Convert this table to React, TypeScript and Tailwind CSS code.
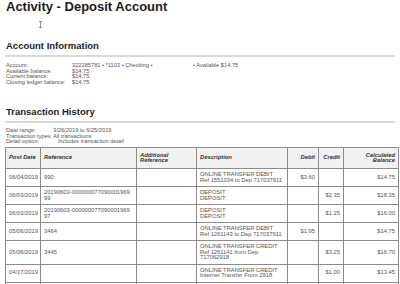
const rows = [
  {
    date: "06/04/2019",
    ref: ["990"],
    desc: ["ONLINE TRANSFER DEBIT", "Ref 1551034 to Dep 717037911"],
    debit: "$3.60",
    credit: "",
    balance: "$14.75",
  },
  {
    date: "06/03/2019",
    ref: ["20190603-000000077090001969", "99"],
    desc: ["DEPOSIT", "DEPOSIT"],
    debit: "",
    credit: "$2.35",
    balance: "$18.35",
  },
  {
    date: "06/03/2019",
    ref: ["20190603-000000077090001969", "97"],
    desc: ["DEPOSIT", "DEPOSIT"],
    debit: "",
    credit: "$1.25",
    balance: "$16.00",
  },
  {
    date: "05/06/2019",
    ref: ["3464"],
    desc: ["ONLINE TRANSFER DEBIT", "Ref 1261143 to Dep 717037911"],
    debit: "$1.95",
    credit: "",
    balance: "$14.75",
  },
  {
    date: "05/06/2019",
    ref: ["3445"],
    desc: ["ONLINE TRANSFER CREDIT", "Ref 1261141 from Dep", "717062918"],
    debit: "",
    credit: "$3.25",
    balance: "$16.70",
  },
  {
    date: "04/17/2019",
    ref: [],
    desc: ["ONLINE TRANSFER CREDIT", "Internet Transfer From 2918"],
    debit: "",
    credit: "$1.00",
    balance: "$13.45",
  },
]

function Lines({ items }: { items: string[] }) {
  return (
    <>
      {items.map((t, i) => (
        <span key={i} className="block whitespace-nowrap">
          {t}
        </span>
      ))}
    </>
  )
}

export default function App() {
  const th = "border border-[#8c8c8c] bg-[#f1f1f1] px-[3px] py-[4.5px] align-middle font-bold italic text-[#333]"
  const td = "border border-[#8c8c8c] px-[3px] py-[3px] align-middle"

  return (
    <div className="relative h-[284px] w-[400px] overflow-hidden bg-white font-['Liberation_Sans',Arial,sans-serif]">
      <h1 className="pl-[6px] text-[13px] leading-[13px] font-bold text-[#1b1b1b]">
        Activity - Deposit Account
      </h1>

      {/* mouse cursor left in the capture */}
      <svg className="absolute left-[38px] top-[21px]" width="5" height="7" viewBox="0 0 5 7">
        <path d="M1 0.5h3M2.5 0.5v6M1 6.5h3" stroke="#666" strokeWidth="0.7" fill="none" />
      </svg>

      <h2 className="mt-[27px] pl-[6px] text-[9.5px] leading-[12px] font-bold text-[#222]">
        Account Information
      </h2>
      <div className="mx-[5px] mt-[3px] h-[2px] bg-[#dadada]" />
      <div className="mt-[6px] pl-[6px] text-[5.7px] leading-[5.5px] text-[#555]">
        <div className="flex whitespace-nowrap">
          <span className="w-[66px] shrink-0">Account:</span>
          <span className="w-[121px] shrink-0">322285781 • *1102 • Checking •</span>
          <span>• Available $14.75</span>
        </div>
        <div className="flex whitespace-nowrap">
          <span className="w-[66px] shrink-0">Available balance:</span>
          <span>$14.75</span>
        </div>
        <div className="flex whitespace-nowrap">
          <span className="w-[66px] shrink-0">Current balance:</span>
          <span>$14.75</span>
        </div>
        <div className="flex whitespace-nowrap">
          <span className="w-[66px] shrink-0">Closing ledger balance:</span>
          <span>$14.75</span>
        </div>
      </div>

      <h2 className="mt-[21px] pl-[6px] text-[9.5px] leading-[12px] font-bold text-[#222]">
        Transaction History
      </h2>
      <div className="mx-[5px] mt-[3px] h-[2px] bg-[#dadada]" />
      <div className="mt-[5px] pl-[6px] text-[5.7px] leading-[5.5px] text-[#555]">
        <div className="flex whitespace-nowrap">
          <span className="w-[47px] shrink-0">Date range:</span>
          <span>3/26/2019 to 6/25/2019</span>
        </div>
        <div className="flex whitespace-nowrap">
          <span className="w-[47px] shrink-0">Transaction types:</span>
          <span>All transactions</span>
        </div>
        <div className="flex whitespace-nowrap">
          <span className="w-[52px] shrink-0">Detail option:</span>
          <span>Includes transaction detail</span>
        </div>
      </div>

      <table className="ml-[5px] mt-[2.5px] w-[393px] table-fixed border-collapse text-left text-[5.8px] leading-[5.5px] text-[#555]">
        <colgroup>
          <col className="w-[35px]" />
          <col className="w-[96px]" />
          <col className="w-[60px]" />
          <col className="w-[91px]" />
          <col className="w-[31px]" />
          <col className="w-[25px]" />
          <col className="w-[55px]" />
        </colgroup>
        <thead>
          <tr>
            <th className={th}>Post Date</th>
            <th className={th}>Reference</th>
            <th className={th}>
              Additional
              <br />
              Reference
            </th>
            <th className={th}>Description</th>
            <th className={`${th} text-right`}>Debit</th>
            <th className={`${th} text-right`}>Credit</th>
            <th className={`${th} text-right`}>
              Calculated
              <br />
              Balance
            </th>
          </tr>
        </thead>
        <tbody>
          {rows.map((r, i) => (
            <tr key={i}>
              <td className={td}>{r.date}</td>
              <td className={td}>
                <Lines items={r.ref} />
              </td>
              <td className={td}></td>
              <td className={td}>
                <Lines items={r.desc} />
              </td>
              <td className={`${td} text-right`}>{r.debit}</td>
              <td className={`${td} text-right`}>{r.credit}</td>
              <td className={`${td} text-right`}>{r.balance}</td>
            </tr>
          ))}
          <tr>
            <td className={td}>&nbsp;</td>
            <td className={td}></td>
            <td className={td}></td>
            <td className={td}></td>
            <td className={td}></td>
            <td className={td}></td>
            <td className={td}></td>
          </tr>
        </tbody>
      </table>
    </div>
  )
}
